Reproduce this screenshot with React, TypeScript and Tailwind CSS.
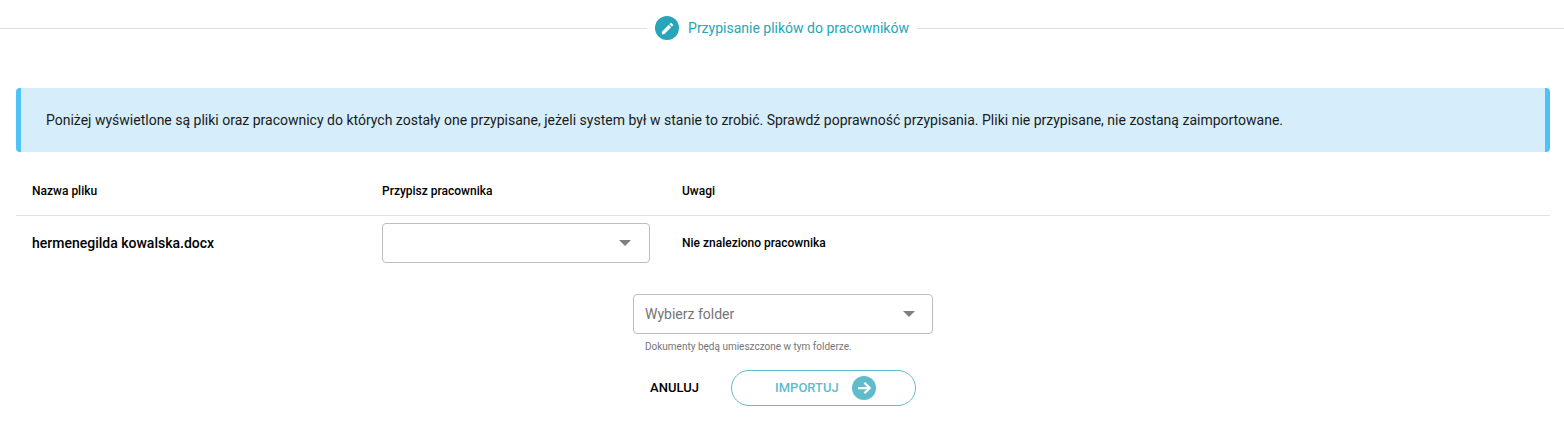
function CaretDown() {
  return <span className="w-0 h-0 border-x-[6px] border-x-transparent border-t-[6px] border-t-[#7f7f7f]" />;
}

function SectionTitle() {
  return (
    <div className="h-14 flex items-center">
      <div className="flex-1 h-px bg-[#e0e0e0]" />
      <div className="flex items-center px-2">
        <span className="w-6 h-6 rounded-full bg-[#26a6b8] flex items-center justify-center">
          <svg viewBox="0 0 24 24" className="w-[15px] h-[15px] fill-white">
            <path d="M3 17.25V21h3.75L17.81 9.94l-3.75-3.75L3 17.25zM20.71 7.04a1 1 0 0 0 0-1.41l-2.34-2.34a1 1 0 0 0-1.41 0l-1.83 1.83 3.75 3.75 1.83-1.83z" />
          </svg>
        </span>
        <span className="ml-[9px] text-sm text-[#26a6b8]">Przypisanie plików do pracowników</span>
      </div>
      <div className="flex-1 h-px bg-[#e0e0e0]" />
    </div>
  );
}

export default function App() {
  return (
    <div className="w-[1564px] h-[422px] bg-white overflow-hidden font-['Roboto',sans-serif] text-black">
      <SectionTitle />

      <div className="mt-8 mx-[14px] ml-4 h-16 flex items-center pl-[25px] bg-[#d6eefc] border-x-[5px] border-[#4fc3f7] rounded text-sm text-[#1a1a1a]">
        Poniżej wyświetlone są pliki oraz pracownicy do których zostały one przypisane, jeżeli system był w stanie to zrobić. Sprawdź poprawność przypisania. Pliki nie przypisane, nie zostaną zaimportowane.
      </div>

      <div className="mx-[14px] ml-4">
        <div className="h-[64px] flex items-center border-b border-[#e0e0e0] text-xs font-medium">
          <div className="w-[350px] pl-4 pt-[15px]">Nazwa pliku</div>
          <div className="w-[300px] pl-4 pt-[15px]">Przypisz pracownika</div>
          <div className="pl-4 pt-[15px]">Uwagi</div>
        </div>
        <div className="flex items-center pt-[7px]">
          <div className="w-[350px] pl-4 text-sm font-medium">hermenegilda kowalska.docx</div>
          <div className="w-[300px] pl-4">
            <div className="w-[268px] h-10 border border-[#bdbdbd] rounded flex items-center justify-end pr-[18px]">
              <CaretDown />
            </div>
          </div>
          <div className="pl-4 text-xs font-medium">Nie znaleziono pracownika</div>
        </div>
      </div>

      <div className="mt-[31px] flex flex-col items-center">
        <div className="w-[300px] ml-[2px]">
          <div className="h-10 border border-[#bdbdbd] rounded flex items-center justify-between pl-[11px] pr-[17px] text-sm text-[#757575]">
            <span>Wybierz folder</span>
            <CaretDown />
          </div>
          <div className="mt-[7px] pl-3 text-[10px] leading-[12px] text-[#757575]">Dokumenty będą umieszczone w tym folderze.</div>
        </div>
        <div className="mt-[17px] ml-[2px] flex items-center">
          <span className="text-[13px] font-medium">ANULUJ</span>
          <div className="ml-8 w-[185px] h-9 border border-[#5fbccb] rounded-full flex items-center justify-center gap-[13px] pl-[4px] text-[13px] font-medium text-[#5fbccb]">
            <span>IMPORTUJ</span>
            <span className="w-6 h-6 rounded-full bg-[#5fbccb] flex items-center justify-center">
              <svg viewBox="0 0 24 24" className="w-[18px] h-[18px] fill-none stroke-white stroke-[3]">
                <path d="M4 12h15M12.5 5l7 7-7 7" />
              </svg>
            </span>
          </div>
        </div>
      </div>
    </div>
  );
}
